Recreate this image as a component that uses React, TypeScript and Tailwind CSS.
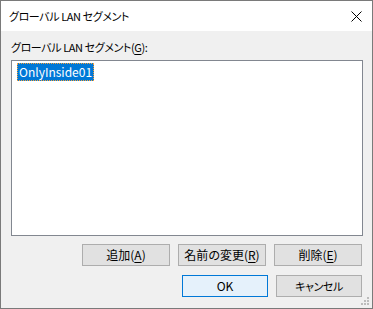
import React from 'react';

const font = { fontFamily: '"Noto Sans CJK JP", "Noto Sans", sans-serif' };

function Key({ k }: { k: string }) {
  return <span className="underline underline-offset-2">{k}</span>;
}

function Btn({ children, w, primary }: { children: React.ReactNode; w: string; primary?: boolean }) {
  return (
    <button
      className={
        primary
          ? `${w} h-[22px] border border-[#0078d7] bg-[#e5f1fb] text-[12px] leading-[20px] text-black flex items-center justify-center`
          : `${w} h-[22px] border border-[#adadad] bg-[#e1e1e1] text-[12px] leading-[20px] text-black flex items-center justify-center`
      }
    >
      {children}
    </button>
  );
}

export default function App() {
  return (
    <div
      className="w-[373px] h-[309px] border border-[#7a7a7a] bg-[#f0f0f0] flex flex-col relative overflow-hidden text-black [font-feature-settings:'palt']"
      style={font}
    >
      {/* Title bar */}
      <div className="h-[30px] bg-white flex items-center justify-between pl-[8px] pr-[10px]">
        <span className="text-[11px] tracking-[-0.4px] leading-[16px]">グローバル LAN セグメント</span>
        <svg width="11" height="11" viewBox="0 0 11 11" className="mt-[1px]">
          <path d="M0.5 0.5 L10.5 10.5 M10.5 0.5 L0.5 10.5" stroke="#000" strokeWidth="1" fill="none" />
        </svg>
      </div>

      {/* Body */}
      <div className="flex-1 flex flex-col pt-[8px] pl-[10px] pr-[10px]">
        <div className="h-[16px] text-[11px] tracking-[-0.4px] leading-[16px]">
          グローバル LAN セグメント(<Key k="G" />):
        </div>
        <div className="mt-[5px] h-[176px] w-[352px] border border-[#828790] bg-white pl-[5px] pt-[2px] flex flex-col items-start">
          <div className="flex h-[18px] items-center bg-[#0078d7] border border-dotted border-[#f7a13a] px-[1px] text-white text-[12px] leading-[16px]">
            OnlyInside01
          </div>
        </div>

        <div className="mt-[8px] flex justify-end gap-[8px]">
          <Btn w="w-[88px]">
            追加(<Key k="A" />)
          </Btn>
          <Btn w="w-[88px]">
            名前の変更(<Key k="R" />)
          </Btn>
          <Btn w="w-[88px]">
            削除(<Key k="E" />)
          </Btn>
        </div>
        <div className="mt-[9px] flex justify-end gap-[8px]">
          <Btn w="w-[86px]" primary>
            OK
          </Btn>
          <Btn w="w-[86px]">
            <span className="text-[11px] tracking-[-0.4px]">キャンセル</span>
          </Btn>
        </div>
      </div>

      {/* Size grip */}
      <svg width="9" height="9" viewBox="0 0 9 9" className="absolute right-[2px] bottom-[2px]">
        <rect x="6" y="0" width="2" height="2" fill="#bcbcbc" />
        <rect x="3" y="3" width="2" height="2" fill="#bcbcbc" />
        <rect x="6" y="3" width="2" height="2" fill="#bcbcbc" />
        <rect x="0" y="6" width="2" height="2" fill="#bcbcbc" />
        <rect x="3" y="6" width="2" height="2" fill="#bcbcbc" />
        <rect x="6" y="6" width="2" height="2" fill="#bcbcbc" />
      </svg>
    </div>
  );
}
